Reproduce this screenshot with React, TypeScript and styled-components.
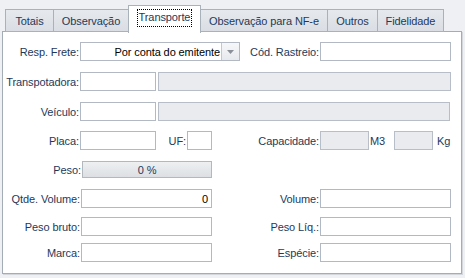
import React from 'react';
import styled, { createGlobalStyle } from 'styled-components';

const GlobalStyle = createGlobalStyle`
  html, body {
    margin: 0;
    padding: 0;
    background: #eef0f3;
  }
  body {
    font-family: "Liberation Sans", Arial, sans-serif;
    font-size: 11px;
    letter-spacing: -0.1px;
    color: #1e395b;
  }
`;

const Page = styled.div`
  width: 465px;
  height: 278px;
  background: #eef0f3;
  overflow: hidden;
`;

const TabStrip = styled.div`
  display: flex;
  align-items: flex-end;
  height: 32px;
  padding-left: 5px;
`;

const Tab = styled.div<{ $w: number; $active?: boolean }>`
  position: relative;
  box-sizing: border-box;
  width: ${(p) => p.$w}px;
  height: ${(p) => (p.$active ? 28 : 23)}px;
  margin-bottom: ${(p) => (p.$active ? -1 : 0)}px;
  margin-left: -1px;
  z-index: ${(p) => (p.$active ? 2 : 1)};
  display: flex;
  align-items: center;
  justify-content: center;
  border: 1px solid #a9b1bb;
  border-bottom: ${(p) => (p.$active ? 'none' : '1px solid #a9b1bb')};
  background: ${(p) => (p.$active ? '#ffffff' : 'linear-gradient(#e6e9ed, #dadee4)')};
  color: #1e395b;
  padding-bottom: ${(p) => (p.$active ? 4 : 0)}px;
  &:first-child {
    margin-left: 0;
  }
`;

const Focus = styled.span`
  border: 1px dotted #000;
  padding: 1px 1px 2px;
  line-height: 13px;
`;

const Panel = styled.div`
  box-sizing: border-box;
  margin: -1px 0 0 2px;
  width: 460px;
  height: 243px;
  background: #fff;
  border: 1px solid #a4acb6;
  box-shadow: 1px 1px 0 #d3d7dc;
  padding-top: 10px;
`;

const Row = styled.div<{ $gap: number }>`
  display: flex;
  align-items: center;
  height: 19px;
  margin-top: ${(p) => p.$gap}px;
`;

const Label = styled.div<{ $w: number }>`
  box-sizing: border-box;
  width: ${(p) => p.$w}px;
  text-align: right;
  padding-right: 1px;
  white-space: nowrap;
  color: #1e395b;
`;

const Unit = styled.div<{ $w?: number }>`
  box-sizing: border-box;
  width: ${(p) => (p.$w ? `${p.$w}px` : 'auto')};
  padding-left: ${(p) => (p.$w ? 1 : 4)}px;
  color: #1e395b;
`;

const Field = styled.div<{ $w: number; $gray?: boolean; $right?: boolean; $ml?: number }>`
  box-sizing: border-box;
  width: ${(p) => p.$w}px;
  height: 19px;
  margin-left: ${(p) => p.$ml ?? 0}px;
  border: 1px solid ${(p) => (p.$gray ? '#b8bec7' : '#b3b9c2')};
  background: ${(p) => (p.$gray ? '#e9ebef' : '#fff')};
  display: flex;
  align-items: center;
  justify-content: ${(p) => (p.$right ? 'flex-end' : 'flex-start')};
  padding: 0 3px;
  color: #000;
`;

const Combo = styled.div`
  box-sizing: border-box;
  width: 160px;
  height: 19px;
  border: 1px solid #b3b9c2;
  display: flex;
  background: #fff;
`;

const ComboText = styled.div`
  flex: 1;
  display: flex;
  align-items: center;
  justify-content: flex-end;
  padding-right: 1px;
  color: #000;
  white-space: nowrap;
`;

const ComboButton = styled.div`
  width: 17px;
  border-left: 1px solid #c3c8cf;
  background: linear-gradient(#f6f7f9, #e6e9ed);
  display: flex;
  align-items: center;
  justify-content: center;
`;

const Progress = styled.div`
  box-sizing: border-box;
  width: 130px;
  height: 17px;
  border: 1px solid #b3b8bf;
  background: linear-gradient(#eef0f2, #dcdfe3);
  display: flex;
  align-items: center;
  justify-content: center;
  color: #1e395b;
`;

const tabs = [
  { label: 'Totais', w: 49 },
  { label: 'Observação', w: 76 },
  { label: 'Transporte', w: 73, active: true },
  { label: 'Observação para NF-e', w: 128 },
  { label: 'Outros', w: 51 },
  { label: 'Fidelidade', w: 67 },
];

export default function App() {
  return (
    <Page>
      <GlobalStyle />
      {/* Abas */}
      <TabStrip>
        {tabs.map((t) => (
          <Tab key={t.label} $w={t.w} $active={t.active}>
            {t.active ? <Focus>{t.label}</Focus> : t.label}
          </Tab>
        ))}
      </TabStrip>

      {/* Conteúdo da aba Transporte */}
      <Panel>
        <Row $gap={0}>
          <Label $w={77}>Resp. Frete:</Label>
          <Combo>
            <ComboText>Por conta do emitente</ComboText>
            <ComboButton>
              <svg width="7" height="4" viewBox="0 0 7 4">
                <path d="M0 0h7L3.5 4z" fill="#8a9099" />
              </svg>
            </ComboButton>
          </Combo>
          <Label $w={80}>Cód. Rastreio:</Label>
          <Field $w={131} />
        </Row>

        <Row $gap={11}>
          <Label $w={77}>Transpotadora:</Label>
          <Field $w={76} />
          <Field $w={293} $gray $ml={2} />
        </Row>

        <Row $gap={11}>
          <Label $w={77}>Veículo:</Label>
          <Field $w={76} />
          <Field $w={292} $gray $ml={2} />
        </Row>

        <Row $gap={10}>
          <Label $w={77}>Placa:</Label>
          <Field $w={76} />
          <Label $w={31}>UF:</Label>
          <Field $w={25} />
          <Label $w={108}>Capacidade:</Label>
          <Field $w={49} $gray />
          <Unit $w={25}>M3</Unit>
          <Field $w={39} $gray />
          <Unit>Kg</Unit>
        </Row>

        <Row $gap={10}>
          <Label $w={79}>Peso:</Label>
          <Progress>0 %</Progress>
        </Row>

        <Row $gap={10}>
          <Label $w={78}>Qtde. Volume:</Label>
          <Field $w={131} $right>0</Field>
          <Label $w={108}>Volume:</Label>
          <Field $w={131} />
        </Row>

        <Row $gap={9}>
          <Label $w={78}>Peso bruto:</Label>
          <Field $w={131} />
          <Label $w={108}>Peso Líq.:</Label>
          <Field $w={131} />
        </Row>

        <Row $gap={7}>
          <Label $w={78}>Marca:</Label>
          <Field $w={131} />
          <Label $w={108}>Espécie:</Label>
          <Field $w={131} />
        </Row>
      </Panel>
    </Page>
  );
}
